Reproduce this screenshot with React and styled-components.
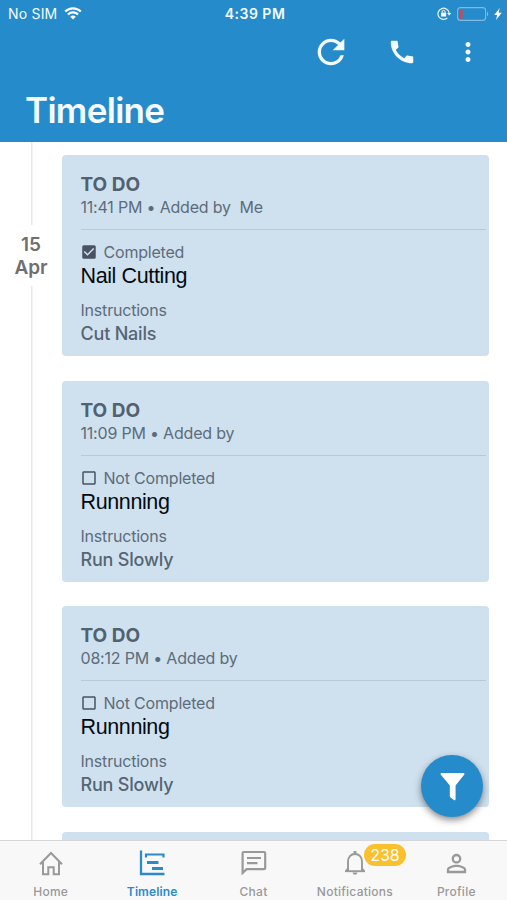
import React from "react";
import styled, { createGlobalStyle } from "styled-components";
import {
    MdCall,
    MdCheckBox,
    MdCheckBoxOutlineBlank,
    MdMoreVert,
    MdPersonOutline,
    MdRefresh,
} from "react-icons/md";

const TODOS = [
    {
        id: 1,
        time: "11:41 PM",
        addedBy: "Me",
        completed: true,
        title: "Nail Cutting",
        instructions: "Cut Nails",
    },
    { id: 2, time: "11:09 PM", completed: false, title: "Runnning", instructions: "Run Slowly" },
    { id: 3, time: "08:12 PM", completed: false, title: "Runnning", instructions: "Run Slowly" },
];

const TABS = [
    { label: "Home", icon: <HomeIcon /> },
    { label: "Timeline", icon: <TimelineIcon />, active: true },
    { label: "Chat", icon: <ChatIcon /> },
    { label: "Notifications", icon: <BellIcon />, badge: 238 },
    { label: "Profile", icon: <MdPersonOutline size={29} /> },
];

export default function App() {
    return (
        <Screen>
            <GlobalStyle />
            <Header>
                <StatusBar />
                <Toolbar>
                    <MdRefresh size={40} />
                    <MdCall size={30} />
                    <MdMoreVert size={30} />
                </Toolbar>
                <Title>Timeline</Title>
            </Header>
            <Content>
                <Rail>
                    <RailDate>
                        <span>15</span>
                        <span>Apr</span>
                    </RailDate>
                </Rail>
                <List>
                    {TODOS.map((item) => (
                        <TodoCard key={item.id} item={item} />
                    ))}
                    <Card />
                </List>
                <Fab aria-label="Filter">
                    <FilterIcon />
                </Fab>
            </Content>
            <TabBar>
                {TABS.map((tab) => (
                    <Tab key={tab.label} $active={tab.active}>
                        <TabIcon>
                            {tab.icon}
                            {tab.badge && <Badge>{tab.badge}</Badge>}
                        </TabIcon>
                        <TabLabel $active={tab.active}>{tab.label}</TabLabel>
                    </Tab>
                ))}
            </TabBar>
        </Screen>
    );
}

function StatusBar() {
    return (
        <StatusRow>
            <StatusLeft>
                <span>No SIM</span>
                <svg width="18" height="13" viewBox="0 0 18 13" fill="none">
                    <path d="M1.2 4.6a11 11 0 0 1 15.6 0" stroke="#fff" strokeWidth="2.1" />
                    <path d="M3.9 7.5a7.2 7.2 0 0 1 10.2 0" stroke="#fff" strokeWidth="2.1" />
                    <path d="M9 12.6 6.2 9.8a4 4 0 0 1 5.6 0z" fill="#fff" />
                </svg>
            </StatusLeft>
            <Clock>4:39 PM</Clock>
            <StatusRight>
                <svg width="15" height="13" viewBox="0 0 15 13" fill="none">
                    <path d="M10.4 10.9A5.6 5.6 0 1 1 12.1 6" stroke="#e4f4fd" strokeWidth="1.2" />
                    <path d="M10.1 6h4.2l-2.1 2.7z" fill="#e4f4fd" />
                    <rect x="4.1" y="5.7" width="5" height="3.9" rx=".5" fill="#fff" />
                    <path d="M5.1 6V4.8a1.5 1.5 0 0 1 3 0V6" stroke="#fff" />
                </svg>
                <svg width="32" height="14" viewBox="0 0 32 14" fill="none">
                    <rect x=".6" y=".6" width="28" height="12.8" rx="3" stroke="#7fbbe2" strokeWidth="1.1" />
                    <rect x="2.2" y="2.2" width="3.4" height="9.6" rx="1" fill="#c9495b" />
                    <path d="M30 4.7c1.7.7 1.7 3.9 0 4.6z" fill="#7fbbe2" />
                </svg>
                <svg width="8" height="12" viewBox="0 0 8 12">
                    <path d="M5.800 0 .2 6.900h3L2 12l5.800-7.300H4.600z" fill="#fff" />
                </svg>
            </StatusRight>
        </StatusRow>
    );
}

function TodoCard({ item }) {
    return (
        <Card>
            <CardHead>
                <Kind>TO DO</Kind>
                <Meta>
                    {item.time} • Added by{item.addedBy && `\u00a0 ${item.addedBy}`}
                </Meta>
            </CardHead>
            <Status>
                {item.completed ? <MdCheckBox size={18} /> : <MdCheckBoxOutlineBlank size={18} />}
                <span>{item.completed ? "Completed" : "Not Completed"}</span>
            </Status>
            <TaskTitle>{item.title}</TaskTitle>
            <Label>Instructions</Label>
            <Instructions>{item.instructions}</Instructions>
        </Card>
    );
}

function HomeIcon() {
    return (
        <svg width="25" height="26" viewBox="0 0 25 26" fill="none" stroke="currentColor" strokeWidth="2">
            <path d="M2 14.200 13 3l11 11.200" />
            <path d="M5 12V24.200H10.300V17.200H15.700V24.200H21V12" />
        </svg>
    );
}

function TimelineIcon() {
    return (
        <svg width="26" height="26" viewBox="0 0 26 26" fill="none" stroke="currentColor">
            <path d="M2 .5V24H25.500" strokeWidth="2.300" />
            <path d="M7 7.500V4.500H24.500V7.500" strokeWidth="2.200" />
            <path d="M8 12.500H19.500M13 18.500H24" strokeWidth="2.900" />
        </svg>
    );
}

function ChatIcon() {
    return (
        <svg width="26" height="26" viewBox="0 0 26 26" fill="none" stroke="currentColor" strokeWidth="2.200">
            <path d="M1.600 23V3.200a1.200 1.200 0 0 1 1.200-1.200H23a1.200 1.200 0 0 1 1.200 1.200V18a1.200 1.200 0 0 1-1.200 1.200H5.600z" />
            <path d="M6 8H20M6 13.200H16.500" />
        </svg>
    );
}

function BellIcon() {
    return (
        <svg width="22" height="26" viewBox="0 0 22 26" fill="none" stroke="currentColor" strokeWidth="1.900">
            <path d="M1 21.200H21" />
            <path d="M4 21V11.500C4 7.200 6.800 4 11 4s7 3.200 7 7.500V21" />
            <path d="M2 20.800 4.500 18M20 20.800 17.500 18" />
            <path d="M11 1v3" strokeWidth="2.800" />
            <path d="M8.500 22.600h5c-.5 1.700-1.400 2.200-2.500 2.200s-2-.5-2.500-2.200z" fill="currentColor" stroke="none" />
        </svg>
    );
}

function FilterIcon() {
    return (
        <svg width="25" height="29" viewBox="0 0 26 30" fill="#fff">
            <path d="M1.500 0h23c1 0 1.200 1 .6 1.800L16.200 13v14c0 1.300-.9 1.600-1.800 1l-3.400-2.600c-.6-.5-.8-.9-.8-1.600V13L.9 1.800C.3 1 .5 0 1.500 0z" />
        </svg>
    );
}

const GlobalStyle = createGlobalStyle`
    * {
        box-sizing: border-box;
    }
    body {
        margin: 0;
        background: #fff;
        font-family: Inter, "Liberation Sans", sans-serif;
    }
    svg {
        display: block;
        flex-shrink: 0;
    }
`;

const Screen = styled.div`
    display: flex;
    flex-direction: column;
    height: 900px;
    width: 507px;
    overflow: hidden;
`;

const Header = styled.header`
    height: 142px;
    flex-shrink: 0;
    background: #258bcb;
    color: #f4fcff;
`;

const StatusRow = styled.div`
    display: grid;
    grid-template-columns: 1fr auto 1fr;
    align-items: center;
    height: 27px;
    padding: 0 5px 0 8px;
    font-size: 14px;
`;

const StatusLeft = styled.div`
    display: flex;
    align-items: center;
    gap: 7px;
    letter-spacing: 0.2px;
`;

const Clock = styled.span`
    font-weight: 600;
    letter-spacing: 0.5px;
`;

const StatusRight = styled.div`
    display: flex;
    align-items: center;
    justify-content: flex-end;
    gap: 5px;
`;

const Toolbar = styled.div`
    display: flex;
    align-items: center;
    justify-content: flex-end;
    height: 50px;
    padding-right: 24px;
    gap: 36px;
`;

const Title = styled.h1`
    margin: 12px 0 0 25px;
    font-size: 35px;
    line-height: 42px;
    font-weight: 600;
    letter-spacing: -0.7px;
`;

const Content = styled.main`
    display: flex;
    position: relative;
    flex: 1;
    min-height: 0;
    overflow: hidden;
`;

const Rail = styled.div`
    width: 62px;
    flex-shrink: 0;
    padding-top: 83px;
    background: linear-gradient(#e8e8e8, #e8e8e8) 31px 0 / 1.5px 100% no-repeat;
`;

const RailDate = styled.div`
    display: flex;
    flex-direction: column;
    align-items: center;
    height: 61px;
    padding-top: 8px;
    background: #fff;
    color: #6f6f72;
    font-size: 19px;
    line-height: 23px;
    font-weight: 600;
`;

const List = styled.div`
    display: flex;
    flex-direction: column;
    flex: 1;
    gap: 24.6px;
    padding: 13px 18px 0 0;
`;

const Card = styled.article`
    height: 201px;
    flex-shrink: 0;
    padding: 18px 3px 0 18.5px;
    border-radius: 4px;
    background: #cfe1ef;
    color: #5d6c7a;
    font-size: 16px;
    letter-spacing: -0.2px;
`;

const CardHead = styled.div`
    height: 57px;
    border-bottom: 1.5px solid #b7c9d9;
`;

const Kind = styled.div`
    color: #526170;
    font-size: 19px;
    line-height: 24px;
    font-weight: 700;
    letter-spacing: 0;
`;

const Meta = styled.div`
    line-height: 21px;
    white-space: nowrap;
`;

const Status = styled.div`
    display: flex;
    align-items: center;
    gap: 6px;
    height: 22px;
    margin: 11px 0 0 -1px;
    svg {
        color: #4a5364;
    }
`;

const TaskTitle = styled.div`
    height: 26px;
    color: #050a10;
    font-family: "Liberation Sans", sans-serif;
    font-size: 21.5px;
    line-height: 26px;
    letter-spacing: -0.38px;
`;

const Label = styled.div`
    margin-top: 10px;
    line-height: 22px;
`;

const Instructions = styled.div`
    color: #566573;
    font-size: 18px;
    line-height: 25px;
    font-weight: 500;
`;

const Fab = styled.button`
    position: absolute;
    right: 24px;
    bottom: 23px;
    display: flex;
    align-items: center;
    justify-content: center;
    width: 62px;
    height: 62px;
    padding: 2px 0 0;
    border: 0;
    border-radius: 50%;
    background: #258bcb;
    box-shadow: 0 3px 7px rgba(40, 40, 50, 0.55);
`;

const TabBar = styled.nav`
    display: flex;
    height: 60px;
    flex-shrink: 0;
    border-top: 1px solid #d5d6d7;
    background: #f8f8f8;
`;

const Tab = styled.div`
    display: flex;
    flex: 1;
    flex-direction: column;
    align-items: center;
    padding-top: 7px;
    color: ${({ $active }) => ($active ? "#2b8bc8" : "#999")};
`;

const TabIcon = styled.div`
    display: flex;
    position: relative;
    align-items: center;
    height: 30px;
`;

const TabLabel = styled.span`
    margin-top: 6px;
    font-size: 12px;
    line-height: 16px;
    font-weight: ${({ $active }) => ($active ? 600 : 500)};
    letter-spacing: ${({ $active }) => ($active ? "0.1px" : "0.25px")};
`;

const Badge = styled.span`
    position: absolute;
    top: -4px;
    left: 20px;
    width: 42px;
    height: 22px;
    border-radius: 11px;
    background: #fbc02d;
    color: #fff;
    font-size: 16px;
    line-height: 22px;
    text-align: center;
`;
